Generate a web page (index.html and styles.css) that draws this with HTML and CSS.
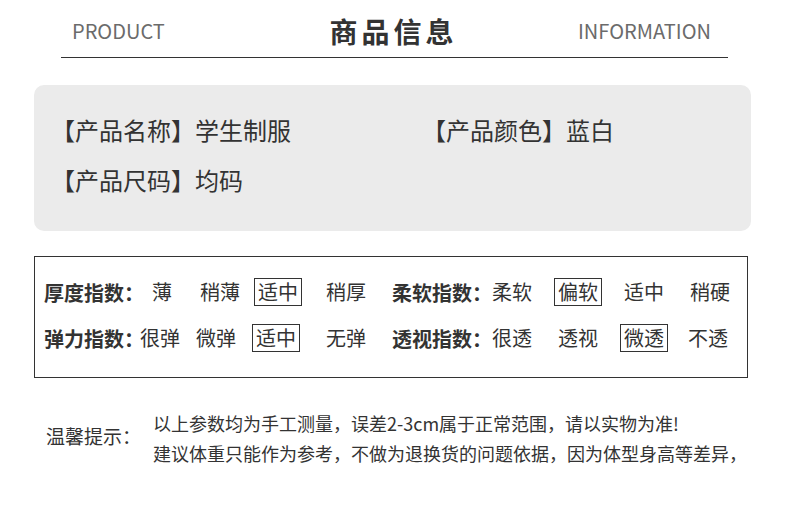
FILE: index.html
```html
<!DOCTYPE html>
<html lang="zh-CN">
<head>
<meta charset="utf-8">
<title>商品信息</title>
<link rel="stylesheet" href="styles.css">
</head>
<body>
<div class="page">
  <header class="head">
    <span class="en en-left">PRODUCT</span>
    <h1 class="title">商品信息</h1>
    <span class="en en-right">INFORMATION</span>
  </header>
  <div class="rule"></div>

  <section class="info">
    <div class="info-row">
      <span class="info-a">【产品名称】学生制服</span>
      <span class="info-b">【产品颜色】蓝白</span>
    </div>
    <div class="info-row">
      <span class="info-a">【产品尺码】均码</span>
    </div>
  </section>

  <section class="index">
    <div class="idx-row">
      <span class="lab">厚度指数：</span>
      <span class="opt r1c1">薄</span>
      <span class="opt r1c2">稍薄</span>
      <span class="opt sel r1c3">适中</span>
      <span class="opt r1c4">稍厚</span>
      <span class="lab r1c5">柔软指数：</span>
      <span class="opt r1c6">柔软</span>
      <span class="opt sel r1c7">偏软</span>
      <span class="opt r1c8">适中</span>
      <span class="opt r1c9">稍硬</span>
    </div>
    <div class="idx-row">
      <span class="lab">弹力指数：</span>
      <span class="opt r2c1">很弹</span>
      <span class="opt r2c2">微弹</span>
      <span class="opt sel r2c3">适中</span>
      <span class="opt r2c4">无弹</span>
      <span class="lab r2c5">透视指数：</span>
      <span class="opt r2c6">很透</span>
      <span class="opt r2c7">透视</span>
      <span class="opt sel r2c8">微透</span>
      <span class="opt r2c9">不透</span>
    </div>
  </section>

  <section class="tips">
    <div class="tips-label">温馨提示：</div>
    <div class="tips-text">
      <p>以上参数均为手工测量，误差2-3cm属于正常范围，请以实物为准!</p>
      <p>建议体重只能作为参考，不做为退换货的问题依据，因为体型身高等差异，</p>
    </div>
  </section>
</div>
</body>
</html>
```

FILE: styles.css
```css
* { box-sizing: border-box; }
html, body { margin: 0; padding: 0; background: #fff; }
body {
  font-family: "Noto Sans CJK SC", "Noto Sans", sans-serif;
  color: #333;
  width: 790px;
  height: 526px;
  overflow: hidden;
}
.page { width: 790px; }

.head {
  display: grid;
  grid-template-columns: 1fr auto 1fr;
  align-items: center;
  height: 57px;
  padding: 4px 79px 0 72px;
}
.en {
  font-size: 20px;
  color: #6b6b6b;
  font-weight: 400;
}
.en-right { justify-self: end; }
.title {
  margin: 0;
  font-size: 28px;
  font-weight: 700;
  letter-spacing: 4px;
  margin-right: -4px;
  color: #333;
}
.rule {
  height: 1px;
  background: #333;
  margin: 0 62px 0 61px;
}

.info {
  margin: 27px 39px 0 34px;
  height: 146px;
  background: #ebebeb;
  border-radius: 10px;
  padding: 19px 0 0 17px;
  font-size: 24px;
}
.info-row {
  display: flex;
  height: 50px;
  align-items: center;
}
.info-a { width: 371px; }

.index {
  margin: 25px 42px 0 34px;
  height: 122px;
  border: 1px solid #333;
  padding: 12px 0 0 9px;
  font-size: 20px;
}
.idx-row {
  display: flex;
  align-items: center;
  height: 46px;
}
.lab { font-weight: 700; }
.opt { line-height: 26px; }
.sel {
  border: 1px solid #333;
  padding: 0 3px;
}
.r1c1 { margin-left: 8px; }
.r1c2 { margin-left: 28px; }
.r1c3 { margin-left: 14px; }
.r1c4 { margin-left: 24px; }
.r1c5 { margin-left: 26px; }
.r1c6 { margin-left: 0; }
.r1c7 { margin-left: 22px; }
.r1c8 { margin-left: 22px; }
.r1c9 { margin-left: 26px; }

.r2c1 { margin-left: -4px; }
.r2c2 { margin-left: 16px; }
.r2c3 { margin-left: 16px; }
.r2c4 { margin-left: 26px; }
.r2c5 { margin-left: 26px; }
.r2c6 { margin-left: 0; }
.r2c7 { margin-left: 26px; }
.r2c8 { margin-left: 22px; }
.r2c9 { margin-left: 20px; }

.tips {
  display: flex;
  align-items: center;
  margin: 30px 0 0 46px;
}
.tips-label {
  font-size: 19px;
  width: 107px;
  margin-top: -6px;
}
.tips-text p {
  margin: 0;
  font-size: 18px;
  line-height: 30px;
}
```
